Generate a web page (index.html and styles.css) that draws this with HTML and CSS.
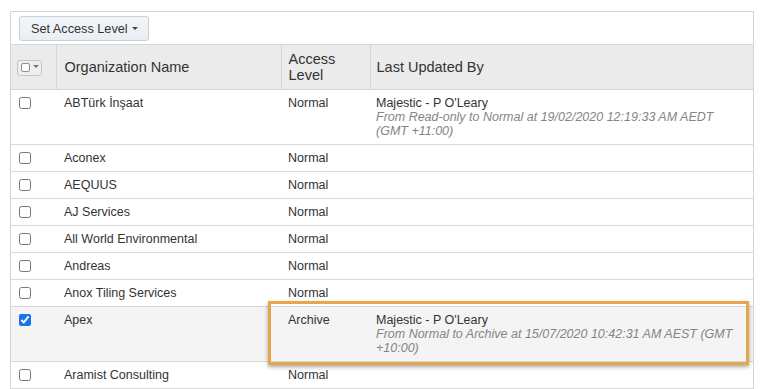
FILE: index.html
```html
<!DOCTYPE html>
<html>
<head>
<meta charset="utf-8">
<link rel="stylesheet" href="styles.css">
</head>
<body>
<div class="panel">
  <div class="toolbar">
    <button class="btn">Set Access Level <span class="caret"></span></button>
  </div>
  <table class="grid">
    <colgroup>
      <col class="c-check"><col class="c-name"><col class="c-level"><col class="c-upd">
    </colgroup>
    <thead>
      <tr>
        <th class="th-check"><span class="sel-drop"><span class="sel-box"></span><span class="caret small"></span></span></th>
        <th>Organization Name</th>
        <th class="two">Access<br>Level</th>
        <th>Last Updated By</th>
      </tr>
    </thead>
    <tbody>
      <tr>
        <td class="cb"><input type="checkbox"></td>
        <td>ABTürk İnşaat</td>
        <td>Normal</td>
        <td>Majestic - P O'Leary<br><span class="note">From Read-only to Normal at 19/02/2020 12:19:33 AM AEDT (GMT +11:00)</span></td>
      </tr>
      <tr><td class="cb"><input type="checkbox"></td><td>Aconex</td><td>Normal</td><td></td></tr>
      <tr><td class="cb"><input type="checkbox"></td><td>AEQUUS</td><td>Normal</td><td></td></tr>
      <tr><td class="cb"><input type="checkbox"></td><td>AJ Services</td><td>Normal</td><td></td></tr>
      <tr><td class="cb"><input type="checkbox"></td><td>All World Environmental</td><td>Normal</td><td></td></tr>
      <tr><td class="cb"><input type="checkbox"></td><td>Andreas</td><td>Normal</td><td></td></tr>
      <tr><td class="cb"><input type="checkbox"></td><td>Anox Tiling Services</td><td>Normal</td><td></td></tr>
      <tr class="selected">
        <td class="cb"><input type="checkbox" checked></td>
        <td>Apex</td>
        <td>Archive</td>
        <td>Majestic - P O'Leary<br><span class="note">From Normal to Archive at 15/07/2020 10:42:31 AM AEST (GMT +10:00)</span></td>
      </tr>
      <tr><td class="cb"><input type="checkbox"></td><td>Aramist Consulting</td><td>Normal</td><td></td></tr>
    </tbody>
  </table>
  <div class="highlight"></div>
</div>
</body>
</html>
```

FILE: styles.css
```css
html, body {
  margin: 0;
  padding: 0;
  background: #ffffff;
}
body {
  font-family: "Liberation Sans", Arial, sans-serif;
  color: #333333;
  overflow: hidden;
}
.panel {
  position: relative;
  margin: 11px 0 0 10px;
  width: 744px;
  border: 1px solid #d4d4d4;
  border-bottom: none;
  box-sizing: border-box;
}
.toolbar {
  height: 33px;
  padding: 4px 0 0 8px;
  box-sizing: border-box;
  border-bottom: 1px solid #d4d4d4;
}
.btn {
  height: 25px;
  width: 130px;
  padding: 0 0 0 11px;
  text-align: left;
  font-family: "Liberation Sans", Arial, sans-serif;
  font-size: 12.7px;
  color: #333333;
  background: linear-gradient(#f3f6f8, #eaeef2);
  border: 1px solid #c9d0d7;
  border-radius: 3px;
}
.caret {
  display: inline-block;
  width: 0;
  height: 0;
  border-left: 3px solid transparent;
  border-right: 3px solid transparent;
  border-top: 3px solid #444;
  vertical-align: middle;
  margin-left: 1px;
  margin-top: -2px;
}
.caret.small {
  border-top-color: #777;
  margin-left: 3px;
}
.grid {
  width: 100%;
  border-collapse: collapse;
  table-layout: fixed;
  font-size: 12.5px;
}
.c-check { width: 45px; }
.c-name { width: 225px; }
.c-level { width: 89px; }
.grid th {
  background: #ebebeb;
  font-weight: normal;
  font-size: 14.5px;
  line-height: 16px;
  text-align: left;
  padding: 6px 6px 6px 7px;
  height: 32px;
  vertical-align: middle;
  border-left: 1px solid #d4d4d4;
  border-bottom: 1px solid #d4d4d4;
  color: #333;
}
.grid th:first-child { border-left: none; }
.grid th:nth-child(2) { padding-left: 8px; }
.grid th:nth-child(4) { padding-left: 6px; }
.grid td {
  padding: 6px 6px 6px 7px;
  line-height: 14px;
  vertical-align: top;
  border-bottom: 1px solid #d9d9d9;
}
.grid td:nth-child(2) { padding-left: 8px; }
.grid td:nth-child(4) { padding-left: 6px; }
.grid td.cb {
  padding: 7px 0 0 8px;
}
.grid td.cb input {
  margin: 0;
  width: 12px;
  height: 12px;
  display: block;
  accent-color: #1a73e8;
}
.th-check {
  padding: 0 0 0 6px !important;
}
.sel-drop {
  display: inline-flex;
  align-items: center;
  width: 25px;
  height: 16px;
  box-sizing: border-box;
  border: 1px solid #c4c4c4;
  border-radius: 3px;
  background: #efefef;
  padding-left: 3px;
  vertical-align: middle;
}
.sel-box {
  width: 9px;
  height: 9px;
  box-sizing: border-box;
  border: 1px solid #8f8f8f;
  border-radius: 2px;
  background: #fff;
}
.note {
  font-style: italic;
  color: #858585;
}
.selected td {
  background: #f4f4f4;
}
.highlight {
  position: absolute;
  left: 257px;
  top: 289px;
  width: 481px;
  height: 64px;
  box-sizing: border-box;
  border: 3px solid #e6a74c;
  box-shadow: 0 2px 4px rgba(0,0,0,0.35);
  pointer-events: none;
}
```
